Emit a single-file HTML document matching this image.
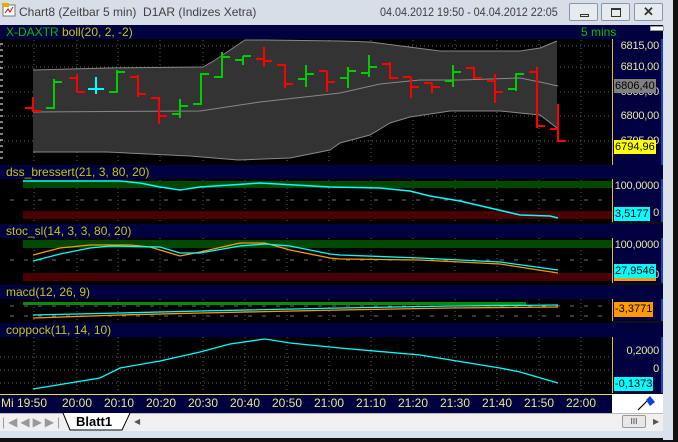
<!DOCTYPE html>
<html><head><meta charset="utf-8"><style>
*{margin:0;padding:0;box-sizing:border-box}
body{width:678px;height:442px;overflow:hidden;background:#101010;position:relative;font-family:"Liberation Sans",Arial,sans-serif}
.a{position:absolute;white-space:nowrap}
.hd{position:absolute;left:0;width:663px;background:#000040;height:14px;font-size:12px;line-height:14px;color:#c8c800;padding-left:6px}
.ax{position:absolute;left:612px;width:51px;background:#000040;border-left:1px solid #e0c040;border-right:2px solid #2040c0;font-size:11px;color:#e8e8a0;overflow:hidden}
.lb{position:absolute;right:2px;font-size:11px;line-height:13px;letter-spacing:-0.2px}
.tl{position:absolute;top:396px;font-size:12px;color:#e8e880}
</style></head><body>
<div class="a" style="left:0;top:0;width:663px;height:25px;background:#d7dee7"></div>
<div class="a" style="left:663px;top:0;width:10px;height:440px;background:#dae2ec"></div>
<div class="a" style="left:0;top:430px;width:673px;height:8px;background:#d8e2ee"></div>
<svg class="a" style="left:2px;top:3px" width="14" height="14"><rect x="1" y="2" width="12" height="11" fill="#fff" stroke="#777"/><rect x="0" y="0" width="7" height="4" fill="#e0b000"/><path d="M3 10 L6 6 L8 9 L11 4" stroke="#c00" fill="none"/></svg>
<div class="a" style="left:19px;top:5px;font-size:12px;color:#404040">Chart8 (Zeitbar 5 min)&nbsp; D1AR (Indizes Xetra)</div>
<div class="a" style="left:380px;top:5px;font-size:12px;color:#404040;transform:scaleX(0.9);transform-origin:left">04.04.2012 19:50 - 04.04.2012 22:05</div>
<div class="a" style="left:569px;top:3px;width:29px;height:18px;border:1px solid #8898aa;border-radius:2px;background:#e6ebf0"><div class="a" style="left:10px;top:10px;width:9px;height:3px;border:1px solid #333"></div></div>
<div class="a" style="left:601px;top:3px;width:29px;height:18px;border:1px solid #8898aa;border-radius:2px;background:#e6ebf0"><div class="a" style="left:9px;top:4px;width:10px;height:9px;border:1px solid #333;border-top-width:2px"></div></div>
<div class="a" style="left:634px;top:3px;width:29px;height:18px;border:1px solid #8898aa;border-radius:2px;background:#e6ebf0;font-size:13px;text-align:center;line-height:16px;color:#333;font-weight:bold">✕</div>

<svg class="a" style="left:0;top:25px" width="612" height="369" viewBox="0 25 612 369">
<rect x="0" y="25" width="612" height="369" fill="#000"/>
<g stroke="#606060" stroke-dasharray="1,3" stroke-width="1">
<path d="M34 40V164M77 40V164M118 40V164M160 40V164M203 40V164M245 40V164M287 40V164M329 40V164M371 40V164M413 40V164M455 40V164M497 40V164M539 40V164M581 40V164"/>
<path d="M34 180V221M77 180V221M118 180V221M160 180V221M203 180V221M245 180V221M287 180V221M329 180V221M371 180V221M413 180V221M455 180V221M497 180V221M539 180V221M581 180V221"/>
<path d="M34 238V282M77 238V282M118 238V282M160 238V282M203 238V282M245 238V282M287 238V282M329 238V282M371 238V282M413 238V282M455 238V282M497 238V282M539 238V282M581 238V282"/>
<path d="M34 299V321M77 299V321M118 299V321M160 299V321M203 299V321M245 299V321M287 299V321M329 299V321M371 299V321M413 299V321M455 299V321M497 299V321M539 299V321M581 299V321"/>
<path d="M34 337V393M77 337V393M118 337V393M160 337V393M203 337V393M245 337V393M287 337V393M329 337V393M371 337V393M413 337V393M455 337V393M497 337V393M539 337V393M581 337V393"/>
<path d="M0 46H612M0 67H612M0 92H612M0 116H612M0 141H612M0 357H612M0 370H612M0 383H612"/>
</g>
<g stroke="#707070" stroke-dasharray="4,10"><path d="M10 200H612M10 260H612M10 306H612M10 316H612"/></g>
<polygon fill="#333" points="33,70 108,68 203,67 215,60 230,50 245,40 265,40 340,41 370,42 440,51 520,51 540,48 557,41 557,128 540,115 520,113 500,111 450,111 410,117 390,123 370,135 340,143 330,150 290,158 238,160 190,156 107,152 33,152"/>
<polyline fill="none" stroke="#888" points="33,70 108,68 203,67 215,60 230,50 245,40 265,40 340,41 370,42 440,51 520,51 540,48 557,41"/>
<polyline fill="none" stroke="#888" points="33,152 107,152 190,156 238,160 290,158 330,150 340,143 370,135 390,123 410,117 450,111 500,111 520,113 540,115 557,128"/>
<polyline fill="none" stroke="#888" points="33,112 200,111 260,102 340,93 380,84 420,80 460,80 520,78 540,82 558,86"/>
<g stroke-width="2" fill="none">
<path stroke="#f00" d="M33 97V112M25 108H33M33 111H41"/>
<path stroke="#0c0" d="M54 79V109M46 108H54M54 82H62"/>
<path stroke="#f00" d="M77 74V92M69 78H77M77 92H85"/>
<path stroke="#0ff" d="M96 77V94M88 89H104"/>
<path stroke="#0c0" d="M117 70V93M109 92H117M117 72H125"/>
<path stroke="#f00" d="M138 75V97M130 77H138M138 94H146"/>
<path stroke="#f00" d="M159 97V124M151 98H159M159 116H167"/>
<path stroke="#0c0" d="M180 99V118M172 114H180M180 106H188"/>
<path stroke="#0c0" d="M201 73V105M193 104H201M201 74H209"/>
<path stroke="#0c0" d="M222 52V78M214 77H222M222 57H230"/>
<path stroke="#0c0" d="M243 56V65M235 60H243M243 56H251"/>
<path stroke="#f00" d="M264 47V67M256 59H264M264 61H272"/>
<path stroke="#f00" d="M285 64V88M277 65H285M285 84H293"/>
<path stroke="#0c0" d="M306 65V87M298 79H306M306 74H314"/>
<path stroke="#f00" d="M327 71V92M319 71H327M327 82H335"/>
<path stroke="#0c0" d="M348 67V88M340 78H348M348 71H356"/>
<path stroke="#0c0" d="M369 55V77M361 73H369M369 67H377"/>
<path stroke="#f00" d="M390 62V79M382 64H390M390 78H398"/>
<path stroke="#f00" d="M411 77V98M403 77H411M411 87H419"/>
<path stroke="#f00" d="M432 83V93M424 83H432M432 87H440"/>
<path stroke="#0c0" d="M453 65V87M445 81H453M453 72H461"/>
<path stroke="#f00" d="M474 67V79M466 68H474M474 78H482"/>
<path stroke="#f00" d="M495 74V103M487 81H495M495 92H503"/>
<path stroke="#0c0" d="M516 73V91M508 89H516M516 74H524"/>
<path stroke="#f00" d="M537 67V128M529 72H537M537 126H545"/>
<path stroke="#f00" d="M558 104V142M550 129H558M558 141H566"/>
</g>
<rect x="23" y="181" width="589" height="7" fill="#004800"/>
<rect x="23" y="211" width="589" height="8" fill="#480000"/>
<polyline fill="none" stroke="#0ff" stroke-width="1.5" points="23,181 120,181 140,183 160,187 180,190 200,187 260,183 330,187 380,188 410,191 430,196 460,201 490,208 520,215 550,216 558,218"/>
<rect x="23" y="240" width="589" height="8" fill="#004800"/>
<rect x="23" y="273" width="589" height="8" fill="#480000"/>
<polyline fill="none" stroke="#f90" stroke-width="1.3" points="33,255 60,248 90,245 130,245 150,247 180,256 200,252 240,243 265,243 290,250 330,258 340,259 420,260 500,264 558,273"/>
<polyline fill="none" stroke="#0ff" stroke-width="1.3" points="33,261 60,254 90,248 110,246 160,247 180,253 200,253 240,246 265,244 290,246 330,254 340,255 420,258 500,262 558,270"/>
<rect x="23" y="302" width="503" height="3" fill="#0a8a0a"/>
<polyline fill="none" stroke="#f90" stroke-width="1.3" points="33,318 120,315 200,313 340,310 450,308 558,307"/>
<polyline fill="none" stroke="#0ff" stroke-width="1.3" points="33,315 120,313 200,311 340,308 450,306 558,305"/>
<polyline fill="none" stroke="#0ff" stroke-width="1.3" points="33,389 100,378 120,368 160,361 200,352 230,344 265,339 290,343 330,347 340,348 420,355 500,368 520,372 558,383"/>
<g stroke="#fff"><path d="M0 44H3M0 50H3M0 56H3M0 62H3M0 68H3M0 74H3M0 80H3M0 86H3M0 92H3M0 98H3M0 104H3M0 110H3M0 116H3M0 122H3M0 128H3M0 134H3M0 140H3M0 146H3M0 152H3M0 158H3"/></g>
</svg>
<div class="a" style="left:0;top:25px;width:4px;height:14px;background:#f90"></div>
<div class="hd" style="top:25px"><span style="color:#00c000">X-DAXTR</span> boll(20, 2, -2)</div>
<div class="a" style="left:581px;top:25px;font-size:12px;line-height:14px;color:#00c000">5 mins</div>
<div class="a" style="left:650px;top:26px;width:14px;height:5px;background:#fff;border:1px solid #999"></div>
<div class="hd" style="top:165px">dss_bressert(21, 3, 80, 20)</div>
<div class="hd" style="top:224px">stoc_sl(14, 3, 3, 80, 20)</div>
<div class="hd" style="top:285px">macd(12, 26, 9)</div>
<div class="hd" style="top:323px">coppock(11, 14, 10)</div>

<div class="ax" style="top:39px;height:126px">
<div class="lb" style="top:1px">6815,00</div><div class="lb" style="top:22px">6810,00</div>
<div class="lb" style="top:47px">6805,00</div><div class="lb" style="top:71px">6800,00</div>
<div class="lb" style="top:96px">6795,00</div>
<div class="a" style="left:1px;top:40px;background:#808080;color:#000;font-size:11px;line-height:14px;padding:0 1px">6806,40</div>
<div class="a" style="left:1px;top:101px;background:#ff0;color:#000;font-size:11px;line-height:14px;padding:0 1px">6794,96</div>
</div>
<div class="ax" style="top:179px;height:43px">
<div class="lb" style="top:1px">100,0000</div><div class="lb" style="top:28px">0</div>
<div class="a" style="left:1px;top:28px;background:#0ff;color:#000;font-size:11px;line-height:14px;padding:0 1px">3,5177</div>
</div>
<div class="ax" style="top:238px;height:45px">
<div class="lb" style="top:1px">100,0000</div><div class="lb" style="top:31px">0</div>
<div class="a" style="left:1px;top:26px;background:#0ff;color:#000;font-size:11px;line-height:14px;padding:0 1px;border-bottom:3px solid #f90">27,9546</div>
</div>
<div class="ax" style="top:299px;height:22px">
<div class="a" style="left:1px;top:3px;background:#f90;color:#000;font-size:11px;line-height:15px;padding:0 1px">-3,3771</div>
</div>
<div class="ax" style="top:337px;height:56px">
<div class="lb" style="top:8px">0,2000</div><div class="lb" style="top:26px">0</div>
<div class="a" style="left:1px;top:40px;background:#0ff;color:#000;font-size:11px;line-height:14px;padding:0 1px">-0,1373</div>
</div>

<div class="a" style="left:0;top:394px;width:612px;height:19px;background:#000040;border-top:1px solid #e0e060"></div>
<div class="a" style="left:612px;top:394px;width:51px;height:19px;background:#fff"></div>
<svg class="a" style="left:635px;top:394px" width="24" height="18"><path d="M3 16L12 7" stroke="#000" stroke-width="1.2"/><path d="M11 6L15 2L20 8L15 12Z" fill="#1040e0"/></svg>
<div class="tl" style="left:1px">Mi 19:50</div>
<div class="tl" style="left:62px">20:00</div>
<div class="tl" style="left:104px">20:10</div>
<div class="tl" style="left:146px">20:20</div>
<div class="tl" style="left:188px">20:30</div>
<div class="tl" style="left:230px">20:40</div>
<div class="tl" style="left:272px">20:50</div>
<div class="tl" style="left:314px">21:00</div>
<div class="tl" style="left:356px">21:10</div>
<div class="tl" style="left:398px">21:20</div>
<div class="tl" style="left:440px">21:30</div>
<div class="tl" style="left:482px">21:40</div>
<div class="tl" style="left:524px">21:50</div>
<div class="tl" style="left:566px">22:00</div>

<div class="a" style="left:0;top:413px;width:663px;height:18px;background:#f0f0f0;border-top:1px solid #bbb"></div>
<div class="a" style="left:2px;top:415px;font-size:12px;color:#999;letter-spacing:3px">|◀◀▶▶|</div>
<svg class="a" style="left:62px;top:413px" width="70" height="18"><path d="M1 0L8 17H60L68 0" fill="#fff" stroke="#000"/></svg>
<div class="a" style="left:76px;top:414px;font-size:13px;font-weight:bold;color:#000">Blatt1</div>
<div class="a" style="left:134px;top:417px;font-size:8px;color:#555">◀</div>
<div class="a" style="left:622px;top:415px;width:24px;height:13px;background:#e8e8e8;border:1px solid #999;border-radius:2px;font-size:8px;text-align:center;line-height:11px;color:#333">III</div>
<div class="a" style="left:653px;top:417px;font-size:8px;color:#555">▶</div>
</body></html>
